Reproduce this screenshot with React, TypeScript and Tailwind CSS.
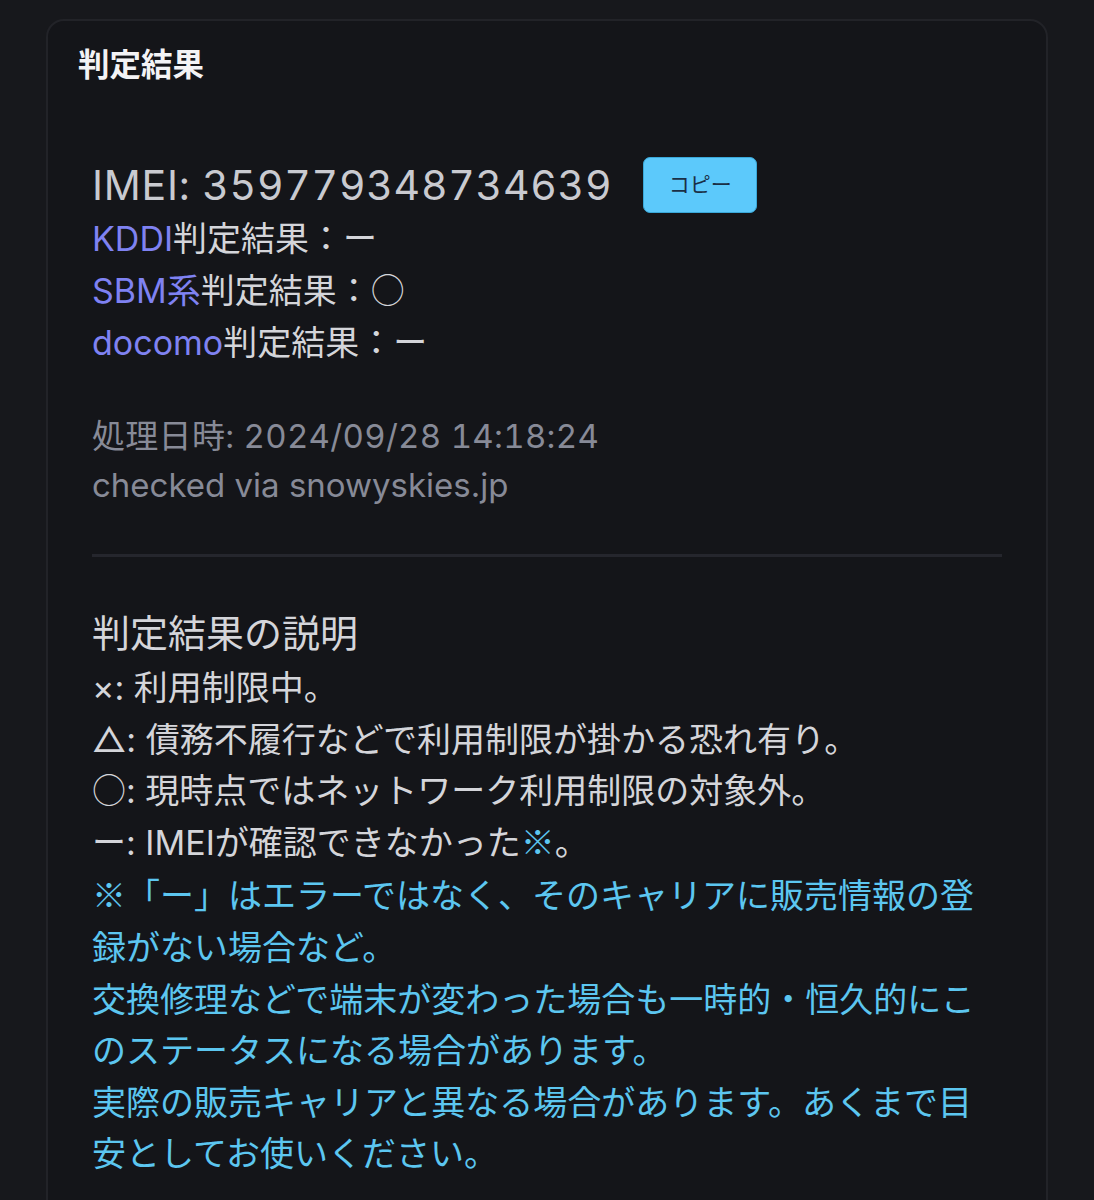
import React from "react";

const font = { fontFamily: 'Inter, "Noto Sans CJK JP", sans-serif' };

function J({ children }: { children: React.ReactNode }) {
  return (
    <span className="inline-block font-['Noto_Sans_CJK_JP',sans-serif] font-light leading-none">{children}</span>
  );
}

export default function App() {
  return (
    <div
      className="h-[1200px] w-full overflow-hidden bg-[#17181c] px-[46px] pt-[19px] font-['Inter','Noto_Sans_CJK_JP',sans-serif]"
      style={font}
    >
      <div className="h-[1300px] rounded-[18px] border-2 border-[#222328] bg-[#141519] px-[30px] pt-[21px]">
        <h1 className="text-[31.5px] font-bold leading-[46px] text-[#f3f3f5]">判定結果</h1>
        <div className="px-[14px]">
          <div className="mt-[69px] flex h-[56px] items-center">
            <span className="text-[41px] leading-[52px] tracking-[0.75px] text-[#c9cad0] tabular-nums">
              IMEI: 359779348734639
            </span>
            <button className="ml-[31px] flex h-[56px] w-[114px] items-center justify-center rounded-[7px] border border-[#3aa8d8] bg-[#5cc9fb] text-[21px] text-[#1a2f45]">
              コピー
            </button>
          </div>
          <div className="text-[34px] leading-[52px] text-[#d4d5da]">
            <div>
              <span className="text-[#7f82f2]">KDDI</span>判定結果：ー
            </div>
            <div>
              <span className="text-[#7f82f2]">SBM系</span>判定結果：<J>○</J>
            </div>
            <div>
              <span className="text-[#7f82f2]">docomo</span>判定結果：ー
            </div>
          </div>
          <div className="mt-[43px] text-[33px] leading-[49px] text-[#878a97]">
            <div className="tabular-nums tracking-[0.3px]">
              処理日時: 2024/09/28 14:18:24
            </div>
            <div>checked via snowyskies.jp</div>
          </div>
          <div className="mt-[44px] h-[3px] bg-[#25262d]" />
          <div className="mt-[48px] text-[38px] leading-[56px] text-[#d4d5da]">判定結果の説明</div>
          <div className="mt-[1px] text-[34px] leading-[51.6px] text-[#d4d5da]">
            <div>×: 利用制限中。</div>
            <div>△: 債務不履行などで利用制限が掛かる恐れ有り。</div>
            <div>
              <J>○</J>: 現時点ではネットワーク利用制限の対象外。
            </div>
            <div>
              ー: IMEIが確認できなかった<span className="text-[#5cc6f0]"><J>※</J></span>。
            </div>
            <div className="font-['Noto_Sans_CJK_JP',sans-serif] text-[#5cc6f0]">
              <div>※「ー」はエラーではなく、そのキャリアに販売情報の登録がない場合など。</div>
              <div>交換修理などで端末が変わった場合も一時的・恒久的にこのステータスになる場合があります。</div>
              <div>実際の販売キャリアと異なる場合があります。あくまで目安としてお使いください。</div>
            </div>
          </div>
        </div>
      </div>
    </div>
  );
}
